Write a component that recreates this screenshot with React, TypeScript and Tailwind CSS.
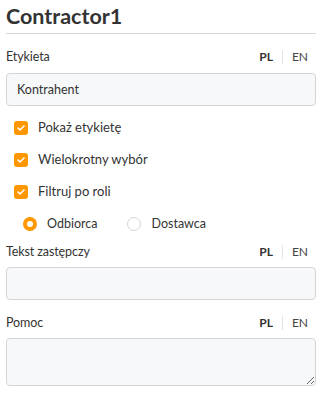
import { useState } from "react";

// Przełącznik języka PL | EN
function LangSwitch() {
  return (
    <div className="flex items-center text-[12px] leading-none">
      <span className="font-bold text-[#333]">PL</span>
      <span className="mx-[9px] h-[14px] w-px bg-[#e4e4e4]" />
      <span className="text-[#444]">EN</span>
    </div>
  );
}

function Label({ text }: { text: string }) {
  return (
    <div className="flex h-[18px] items-center justify-between pr-[10px]">
      <span className="text-[12.5px] tracking-[-0.1px] text-[#333]">{text}</span>
      <LangSwitch />
    </div>
  );
}

function Checkbox({ label, checked }: { label: string; checked: boolean }) {
  return (
    <label className="flex h-[32px] items-center gap-[10px] pl-[8px]">
      <span
        className={
          checked
            ? "flex h-[14px] w-[14px] items-center justify-center rounded-[3px] bg-[#ff9800]"
            : "h-[14px] w-[14px] rounded-[3px] border border-[#ccc] bg-white"
        }
      >
        {checked && (
          <svg width="8" height="6" viewBox="0 0 8 6" fill="none">
            <path d="M1 3l2 2 4-4" stroke="white" strokeWidth="1.6" strokeLinecap="round" strokeLinejoin="round" />
          </svg>
        )}
      </span>
      <span className="text-[13px] text-[#333]">{label}</span>
    </label>
  );
}

function Radio({ label, checked, onClick }: { label: string; checked: boolean; onClick: () => void }) {
  return (
    <button onClick={onClick} className="flex items-center gap-[10px]">
      {checked ? (
        <span className="h-[14px] w-[14px] rounded-full border-[4px] border-[#ff9800] bg-white" />
      ) : (
        <span className="h-[14px] w-[14px] rounded-full border border-[#d4d4d4] bg-white" />
      )}
      <span className="text-[12.5px] text-[#333]">{label}</span>
    </button>
  );
}

export default function App() {
  const [role, setRole] = useState("odbiorca");

  return (
    <div className="min-h-screen bg-white px-[6px] pt-[2px] font-['Lato',sans-serif] text-[#333]" style={{ width: 324 }}>
      {/* Nagłówek */}
      <h1 className="text-[21.5px] font-bold leading-[28px] text-[#333]">Contractor1</h1>
      <div className="mt-[3px] mr-[2px] h-px bg-[#d6d6d6]" />

      {/* Etykieta */}
      <div className="mt-[14px]">
        <Label text="Etykieta" />
      </div>
      <input
        className="mt-[7px] h-[33px] w-[310px] rounded-[4px] border border-[#d3d5d8] bg-[#f7f8fa] px-[10px] text-[12.5px] text-[#333] outline-none"
        defaultValue="Kontrahent"
      />

      {/* Opcje */}
      <div className="mt-[6px]">
        <Checkbox label="Pokaż etykietę" checked />
        <Checkbox label="Wielokrotny wybór" checked />
        <Checkbox label="Filtruj po roli" checked />
      </div>

      <div className="flex h-[32px] items-center gap-[30px] pl-[17px]">
        <Radio label="Odbiorca" checked={role === "odbiorca"} onClick={() => setRole("odbiorca")} />
        <Radio label="Dostawca" checked={role === "dostawca"} onClick={() => setRole("dostawca")} />
      </div>

      {/* Tekst zastępczy */}
      <div className="mt-[3px]">
        <Label text="Tekst zastępczy" />
      </div>
      <input className="mt-[6px] block h-[33px] w-[310px] rounded-[4px] border border-[#d3d5d8] bg-[#f7f8fa] px-[10px] text-[12.5px] outline-none" />

      {/* Pomoc */}
      <div className="mt-[14px]">
        <Label text="Pomoc" />
      </div>
      <textarea className="mt-[6px] block h-[48px] w-[310px] rounded-[4px] border border-[#d3d5d8] bg-[#f7f8fa] px-[10px] text-[12.5px] outline-none" />
    </div>
  );
}
